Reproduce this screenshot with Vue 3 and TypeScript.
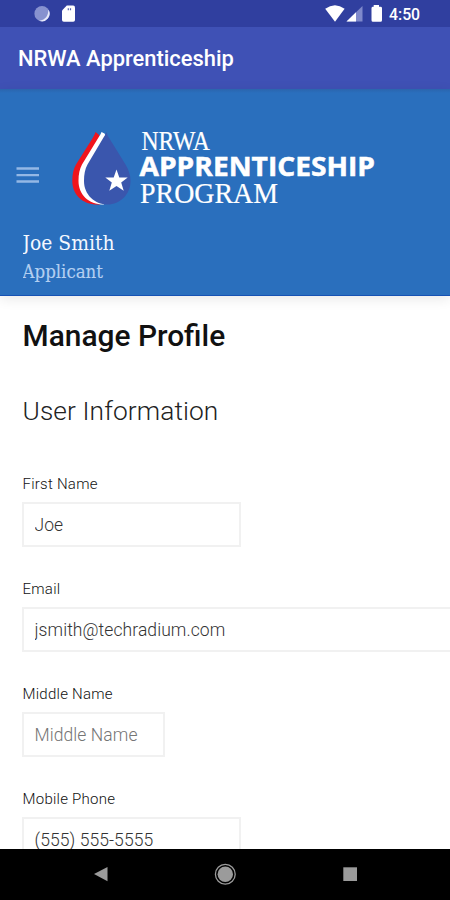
<script setup lang="ts">
interface Field {
  id: string
  label: string
  value: string
  placeholder: string
  size: 'medium' | 'full' | 'small'
}

const fields: Field[] = [
  { id: 'first', label: 'First Name', value: 'Joe', placeholder: '', size: 'medium' },
  { id: 'email', label: 'Email', value: 'jsmith@techradium.com', placeholder: '', size: 'full' },
  { id: 'middle', label: 'Middle Name', value: '', placeholder: 'Middle Name', size: 'small' },
  { id: 'phone', label: 'Mobile Phone', value: '(555) 555-5555', placeholder: '', size: 'medium' },
]
</script>

<template>
  <div class="screen">
    <div class="status">
      <svg class="status-left" width="80" height="27" viewBox="0 0 80 27">
        <circle cx="42" cy="13.7" r="7.6" fill="#8792cf" />
        <path d="M48.3 9.5A7.6 7.6 0 0 1 39 20.7C46 20 48.500 15 48.3 9.5Z" fill="#e6e9fa" />
        <path d="M66.8 5.6H73.2Q75 5.6 75 7.4V20Q75 21.8 73.2 21.8H63.8Q62 21.8 62 20V10.5Z" fill="#fff" />
        <path d="M68.3 8.3V10.3M70.5 8.3V10.3" stroke="#5965b5" stroke-width="1.2" />
      </svg>
      <div class="status-right">
        <svg width="62" height="27" viewBox="0 0 62 27">
          <path d="M0.2 8.8Q10 1.8 19.6 8.8L10 21.7Z" fill="#fff" />
          <path d="M37.5 6V21.5H21.5Z" fill="#7f89cb" />
          <path d="M31 12.3V21.5H21.5Z" fill="#fff" />
          <path d="M48.7 5H54V6.8H55.5Q57 6.8 57 8.2V20.2Q57 21.7 55.5 21.7H48Q46.5 21.7 46.5 20.2V8.2Q46.5 6.8 48 6.8H48.7Z" fill="#fff" />
        </svg>
        <span class="clock">4:50</span>
      </div>
    </div>
    <div class="appbar">NRWA Apprenticeship</div>
    <header class="header">
      <div class="brand">
        <svg class="menu" width="24" height="18" viewBox="0 0 24 18">
          <path d="M.5 2.5H23M.5 9.2H23M.5 15.500H23" stroke="#94b8e5" stroke-width="2.3" />
        </svg>
        <svg class="logo" width="320" height="86" viewBox="66 126 320 86">
          <path d="M95.500 132L98 134L104 140L100 204.500C82 205.500 72.300 194 72.300 181C72.300 174 73.500 169 76 164.500L93 137.500Q95 134 95.500 132Z" fill="#f0141c" />
          <path d="M101.500 132L104.500 133.500L108 140L104 204.500C88 204.500 78.500 194 78.500 181C78.500 174 79.700 169 82 164.500L98.500 137.500Q101 134 101.500 132Z" fill="#fff" />
          <path d="M106.500 132Q107 134.500 108.500 137L125.500 164.500C128.500 169.500 130.500 175 130.500 181C130.500 194.500 120 204.500 107.500 204.500C94.500 204.500 84 194.500 84 181C84 174.500 85 169 87.500 164.500L103.500 137.500Q105.500 134.500 106.500 132Z" fill="#3a56ad" />
          <path d="M116.500 169.500L119.300 177.500H127.700L121.200 182.500L123.700 190.800L116.500 185.900L109.300 190.800L111.800 182.500L105.300 177.500H113.700Z" fill="#fff" />
          <text class="logo-serif" x="141.500" y="150" font-size="26.500" textLength="68.500" lengthAdjust="spacingAndGlyphs">NRWA</text>
          <text class="logo-sans" x="139.500" y="176" font-size="27" textLength="235.500" lengthAdjust="spacingAndGlyphs">APPRENTICESHIP</text>
          <text class="logo-serif" x="140" y="202.500" font-size="29" textLength="138" lengthAdjust="spacingAndGlyphs">PROGRAM</text>
        </svg>
      </div>
      <svg class="user" width="200" height="60" viewBox="0 0 200 60">
        <text x="-0.500" y="21" font-size="21" textLength="92" lengthAdjust="spacingAndGlyphs" fill="#f4f8ff">Joe Smith</text>
        <text x="-0.500" y="48.500" font-size="18" textLength="80.500" lengthAdjust="spacingAndGlyphs" fill="#b4cff1" stroke="#b4cff1">Applicant</text>
      </svg>
    </header>
    <main class="content">
      <h1>Manage Profile</h1>
      <h2>User Information</h2>
      <form class="fields">
        <div v-for="f in fields" :key="f.id" class="field">
          <label :for="f.id">{{ f.label }}</label>
          <input :id="f.id" type="text" :class="f.size" :value="f.value" :placeholder="f.placeholder" />
        </div>
      </form>
    </main>
    <nav class="navbar">
      <svg width="450" height="51" viewBox="0 0 450 51">
        <path d="M94 25L107.500 18V32.300Z" fill="#9b9b9b" />
        <circle cx="225.300" cy="25.200" r="9.900" fill="none" stroke="#9b9b9b" stroke-width="1.300" />
        <circle cx="225.300" cy="25.200" r="7.700" fill="#9b9b9b" />
        <rect x="343.300" y="18.300" width="13.700" height="13.700" fill="#9b9b9b" />
      </svg>
    </nav>
  </div>
</template>

<style>
body {
  margin: 0;
}
</style>

<style scoped>
.screen {
  width: 450px;
  height: 900px;
  overflow: hidden;
  display: flex;
  flex-direction: column;
  background: #fff;
  font-family: Roboto, sans-serif;
}
.status {
  flex: none;
  height: 27px;
  display: flex;
  justify-content: space-between;
  background: #303f9f;
}
.status-right {
  display: flex;
  width: 125px;
}
.status svg {
  flex: none;
}
.clock {
  padding-left: 2px;
  font-size: 15.8px;
  line-height: 29px;
  font-weight: 500;
  color: #fff;
}
.appbar {
  flex: none;
  height: 62px;
  box-sizing: border-box;
  padding-left: 18px;
  background: #3f51b5;
  color: #fff;
  font-size: 21.9px;
  line-height: 64px;
  font-weight: 500;
}
.header {
  flex: none;
  height: 207px;
  box-sizing: border-box;
  padding-top: 37px;
  background: linear-gradient(#2b65ad, #2a6fbd 4px);
  border-bottom: 1px solid #1652b4;
  box-shadow: 0 3px 12px rgba(0, 0, 0, 0.09);
}
.brand {
  display: flex;
  align-items: flex-start;
  padding-left: 16px;
}
.menu {
  margin-top: 40px;
  margin-right: 26px;
}
.logo text {
  fill: #fff;
}
.logo-serif {
  font-family: "Liberation Serif", serif;
  stroke: #fff;
  stroke-width: 0.2px;
}
.logo-sans {
  font-family: "Open Sans", sans-serif;
  font-weight: 700;
  stroke: #fff;
  stroke-width: 0.5px;
}
.user {
  display: block;
  margin: 17px 0 0 22.5px;
  font-family: "DejaVu Serif Condensed", "DejaVu Serif", serif;
  stroke-width: 0.15px;
}
.content {
  flex: 1;
  min-height: 0;
  overflow: hidden;
  padding-left: 22.5px;
}
h1 {
  margin: 20px 0 0;
  font-size: 29.9px;
  line-height: 40px;
  font-weight: 500;
  color: #111;
}
h2 {
  margin: 35px 0 0;
  font-size: 26.3px;
  line-height: 41px;
  font-weight: 300;
  color: #222;
  letter-spacing: 0.1px;
}
.fields {
  display: flex;
  flex-direction: column;
  gap: 32px;
  margin-top: 43px;
}
.field {
  height: 73px;
  display: flex;
  flex-direction: column;
  align-items: flex-start;
}
label {
  height: 27px;
  font-size: 15px;
  line-height: 19px;
  font-weight: 300;
  color: #111;
  letter-spacing: 0.25px;
}
input {
  box-sizing: border-box;
  height: 45px;
  margin: 0 0 0 -0.5px;
  padding: 1px 0 0 10.5px;
  border: 2px solid #f1f1f1;
  border-radius: 0;
  outline: none;
  background: #fff;
  font: 300 17.5px Roboto, sans-serif;
  letter-spacing: 0.08px;
  color: #333;
}
input::placeholder {
  color: #757575;
  opacity: 1;
}
.medium {
  width: 219px;
}
.full {
  width: 450px;
}
.small {
  width: 143px;
}
.navbar {
  flex: none;
  height: 51px;
  background: #000;
}
.navbar svg {
  display: block;
}
</style>
